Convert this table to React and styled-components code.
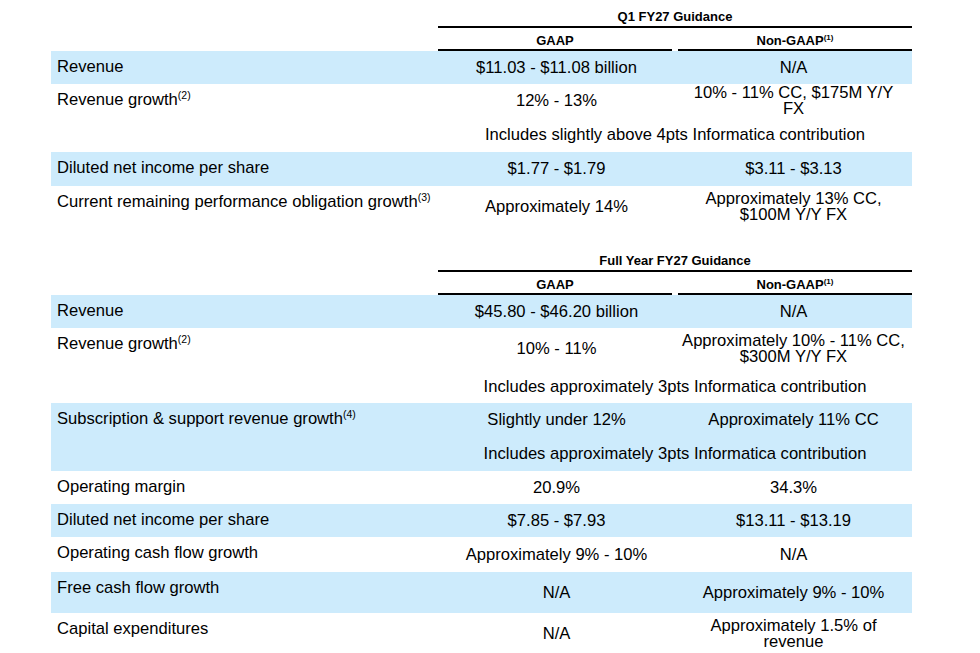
import React from "react";
import styled, { createGlobalStyle } from "styled-components";

const GlobalStyle = createGlobalStyle`
  html, body {
    margin: 0;
    padding: 0;
    background: #fff;
  }
  body {
    font-family: "Liberation Sans", Arial, sans-serif;
    color: #000;
  }
`;

const Page = styled.div`
  width: 980px;
  height: 653px;
  overflow: hidden;
  padding-left: 51px;
  box-sizing: border-box;
`;

const Section = styled.section`
  width: 861px;
  margin-bottom: 16px;
`;

const TitleRow = styled.div`
  display: grid;
  grid-template-columns: 387px 474px;
  height: 28px;
`;

const Title = styled.div`
  grid-column: 2;
  display: flex;
  align-items: flex-end;
  justify-content: center;
  border-bottom: 2px solid #000;
  padding-bottom: 2px;
  font-size: 13px;
  line-height: 15px;
  font-weight: bold;
`;

const HeadRow = styled.div`
  display: grid;
  grid-template-columns: 387px 237px 237px;
  height: 23px;
`;

const HeadCell = styled.div`
  grid-column: ${(p) => p.$col};
  display: flex;
  align-items: flex-end;
  justify-content: center;
  border-bottom: 2px solid #000;
  margin: ${(p) => (p.$col === 2 ? "0 3px 0 0" : "0 0 0 3px")};
  padding-bottom: 1px;
  font-size: 13px;
  line-height: 15px;
  font-weight: bold;
`;

const HeadSup = styled.sup`
  font-size: 8px;
  line-height: 0;
  vertical-align: 5px;
  font-weight: bold;
`;

const Row = styled.div`
  display: grid;
  grid-template-columns: 387px 237px 237px;
  grid-template-rows: ${(p) => (p.$note ? `${p.$h}px ${p.$note}px` : `${p.$h}px`)};
  background: ${(p) => (p.$shaded ? "#cdebfc" : "transparent")};
`;

const Label = styled.div`
  grid-column: 1;
  grid-row: 1 / span ${(p) => (p.$note ? 2 : 1)};
  padding: 6px 0 0 6px;
  font-size: 16.6px;
  line-height: 19px;
`;

const LabelSup = styled.sup`
  font-size: 10.5px;
  line-height: 0;
  vertical-align: 6px;
`;

const Value = styled.div`
  display: flex;
  align-items: center;
  justify-content: center;
  text-align: center;
  padding: 0 6px;
  font-size: 16.6px;
  line-height: 16px;
`;

const Note = styled(Value)`
  grid-column: 2 / span 2;
  grid-row: 2;
`;

const q1 = [
  { label: "Revenue", gaap: "$11.03 - $11.08 billion", non: "N/A", shaded: true, h: 33 },
  {
    label: "Revenue growth",
    sup: "(2)",
    gaap: "12% - 13%",
    non: "10% - 11% CC, $175M Y/Y FX",
    h: 34,
    note: "Includes slightly above 4pts Informatica contribution",
    noteH: 34,
  },
  { label: "Diluted net income per share", gaap: "$1.77 - $1.79", non: "$3.11 - $3.13", shaded: true, h: 34 },
  {
    label: "Current remaining performance obligation growth",
    sup: "(3)",
    gaap: "Approximately 14%",
    non: "Approximately 13% CC, $100M Y/Y FX",
    h: 42,
  },
];

const fy = [
  { label: "Revenue", gaap: "$45.80 - $46.20 billion", non: "N/A", shaded: true, h: 33 },
  {
    label: "Revenue growth",
    sup: "(2)",
    gaap: "10% - 11%",
    non: "Approximately 10% - 11% CC, $300M Y/Y FX",
    h: 42,
    note: "Includes approximately 3pts Informatica contribution",
    noteH: 33,
  },
  {
    label: "Subscription & support revenue growth",
    sup: "(4)",
    gaap: "Slightly under 12%",
    non: "Approximately 11% CC",
    shaded: true,
    h: 34,
    note: "Includes approximately 3pts Informatica contribution",
    noteH: 34,
  },
  { label: "Operating margin", gaap: "20.9%", non: "34.3%", h: 33 },
  { label: "Diluted net income per share", gaap: "$7.85 - $7.93", non: "$13.11 - $13.19", shaded: true, h: 33 },
  { label: "Operating cash flow growth", gaap: "Approximately 9% - 10%", non: "N/A", h: 35 },
  { label: "Free cash flow growth", gaap: "N/A", non: "Approximately 9% - 10%", shaded: true, h: 41 },
  { label: "Capital expenditures", gaap: "N/A", non: "Approximately 1.5% of revenue", h: 42 },
];

function Guidance({ title, rows }) {
  return (
    <Section>
      <TitleRow>
        <Title>{title}</Title>
      </TitleRow>
      <HeadRow>
        <HeadCell $col={2}>
          <span>GAAP</span>
        </HeadCell>
        <HeadCell $col={3}>
          <span>
            Non-GAAP<HeadSup>(1)</HeadSup>
          </span>
        </HeadCell>
      </HeadRow>
      {rows.map((r, i) => (
        <Row key={i} $shaded={r.shaded} $h={r.h} $note={r.note ? r.noteH : 0}>
          <Label $note={!!r.note}>
            {r.label}
            {r.sup && <LabelSup>{r.sup}</LabelSup>}
          </Label>
          <Value>{r.gaap}</Value>
          <Value>{r.non}</Value>
          {r.note && <Note>{r.note}</Note>}
        </Row>
      ))}
    </Section>
  );
}

export default function App() {
  return (
    <>
      <GlobalStyle />
      <Page>
        <Guidance title="Q1 FY27 Guidance" rows={q1} />
        <Guidance title="Full Year FY27 Guidance" rows={fy} />
      </Page>
    </>
  );
}
